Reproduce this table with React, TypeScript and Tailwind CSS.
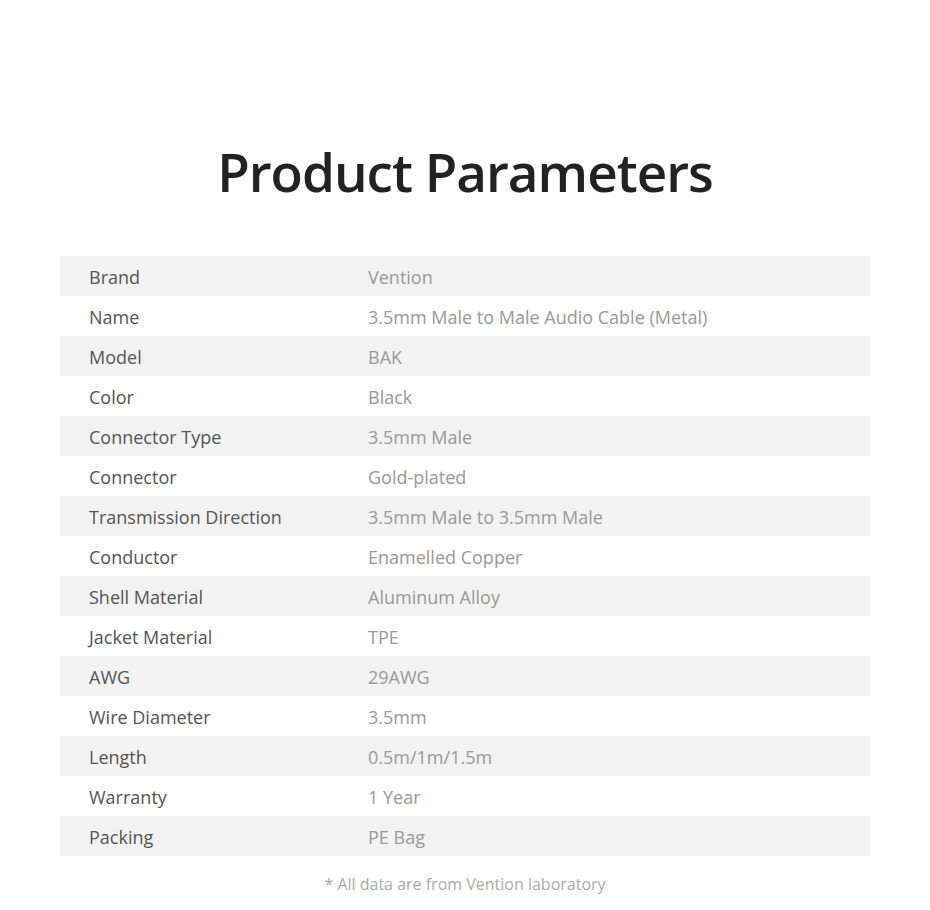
const rows: [string, string][] = [
  ["Brand", "Vention"],
  ["Name", "3.5mm Male to Male Audio Cable (Metal)"],
  ["Model", "BAK"],
  ["Color", "Black"],
  ["Connector Type", "3.5mm Male"],
  ["Connector", "Gold-plated"],
  ["Transmission Direction", "3.5mm Male to 3.5mm Male"],
  ["Conductor", "Enamelled Copper"],
  ["Shell Material", "Aluminum Alloy"],
  ["Jacket Material", "TPE"],
  ["AWG", "29AWG"],
  ["Wire Diameter", "3.5mm"],
  ["Length", "0.5m/1m/1.5m"],
  ["Warranty", "1 Year"],
  ["Packing", "PE Bag"],
];

export default function App() {
  return (
    <div
      className="h-[910px] w-[930px] bg-white"
      style={{ fontFamily: '"Open Sans", "Liberation Sans", sans-serif' }}
    >
      <h1 className="pt-[132px] text-center text-[53px] font-semibold leading-[80px] tracking-[-1px] text-[#222]">
        Product Parameters
      </h1>
      <div className="mx-[60px] mt-[44px]">
        {rows.map(([label, value], i) => (
          <div
            key={label}
            className={`flex h-10 items-center pt-[2px] text-[18px] ${i % 2 === 0 ? "bg-[#f2f2f2]" : "bg-white"}`}
          >
            <div className="w-[308px] pl-[29px] text-[#555]">{label}</div>
            <div className="text-[#999]">{value}</div>
          </div>
        ))}
      </div>
      <p className="mt-[16px] text-center text-[16px] text-[#aaa]">
        * All data are from Vention laboratory
      </p>
    </div>
  );
}
